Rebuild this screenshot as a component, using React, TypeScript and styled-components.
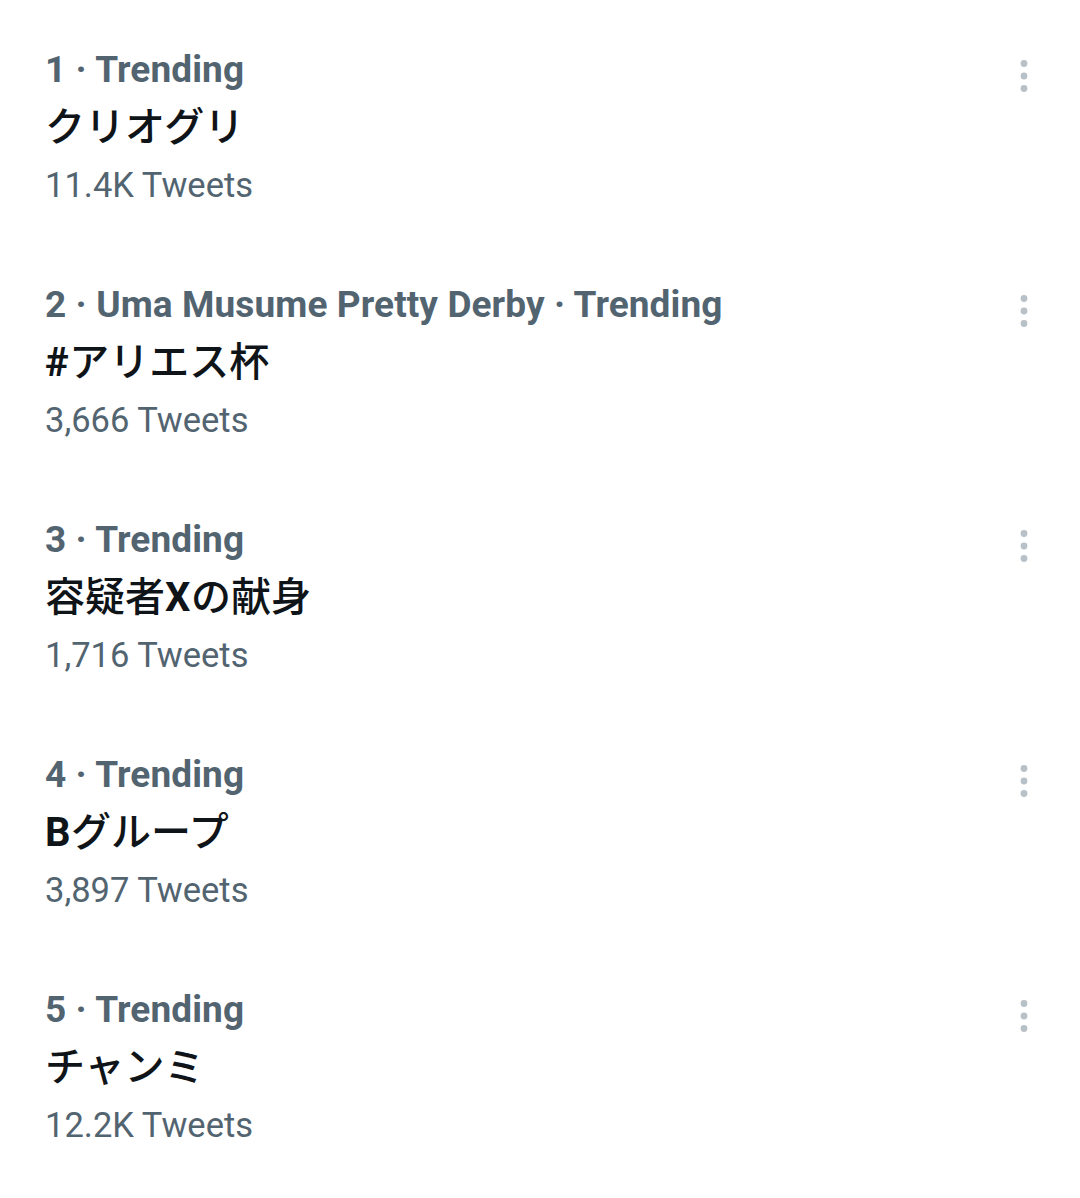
import React from 'react';
import styled, { createGlobalStyle } from 'styled-components';

const GlobalStyle = createGlobalStyle`
  html, body {
    margin: 0;
    padding: 0;
    background: #ffffff;
  }
  body {
    font-family: Roboto, "Noto Sans CJK JP", sans-serif;
    -webkit-font-smoothing: antialiased;
  }
`;

const List = styled.div`
  display: flex;
  flex-direction: column;
  padding-top: 48px;
`;

const Item = styled.div`
  display: flex;
  justify-content: space-between;
  align-items: flex-start;
  height: 235px;
  padding: 0 50px 0 45px;
  box-sizing: border-box;
`;

const Body = styled.div`
  display: flex;
  flex-direction: column;
`;

const Meta = styled.div`
  font-size: 37px;
  line-height: 44px;
  font-weight: 700;
  color: #536471;
  letter-spacing: 0.1px;
`;

const Title = styled.div`
  margin-top: 8px;
  font-size: 40px;
  line-height: 56px;
  font-weight: 500;
  color: #0f1419;
`;

// Latin characters in a title render heavier than the CJK ones
const Latin = styled.span`
  font-weight: 700;
  letter-spacing: 0.5px;
`;

const Count = styled.div`
  margin-top: 7px;
  font-size: 34.5px;
  line-height: 44px;
  font-weight: 400;
  color: #536471;
`;

const MoreButton = styled.button`
  border: 0;
  background: none;
  padding: 0;
  margin-top: 8px;
  width: 12px;
  height: 40px;
  display: flex;
  align-items: center;
  justify-content: center;
  cursor: pointer;
`;

const trends = [
  { meta: '1 · Trending', title: 'クリオグリ', count: '11.4K Tweets' },
  { meta: '2 · Uma Musume Pretty Derby · Trending', title: '#アリエス杯', count: '3,666 Tweets' },
  { meta: '3 · Trending', title: '容疑者Xの献身', count: '1,716 Tweets' },
  { meta: '4 · Trending', title: 'Bグループ', count: '3,897 Tweets' },
  { meta: '5 · Trending', title: 'チャンミ', count: '12.2K Tweets' },
];

const renderTitle = (title: string) =>
  title.split(/([\x21-\x7e]+)/).map((part, i) =>
    /^[\x21-\x7e]+$/.test(part) ? <Latin key={i}>{part}</Latin> : part
  );

const Dots = () => (
  <svg width="10" height="34" viewBox="0 0 10 34">
    <circle cx="5" cy="4.5" r="3.4" fill="#b8c1c7" />
    <circle cx="5" cy="17" r="3.4" fill="#b8c1c7" />
    <circle cx="5" cy="29.5" r="3.4" fill="#b8c1c7" />
  </svg>
);

const App: React.FC = () => (
  <>
    <GlobalStyle />
    <List>
      {trends.map((t) => (
        <Item key={t.meta}>
          <Body>
            <Meta>{t.meta}</Meta>
            <Title>{renderTitle(t.title)}</Title>
            <Count>{t.count}</Count>
          </Body>
          <MoreButton aria-label="More">
            <Dots />
          </MoreButton>
        </Item>
      ))}
    </List>
  </>
);

export default App;
